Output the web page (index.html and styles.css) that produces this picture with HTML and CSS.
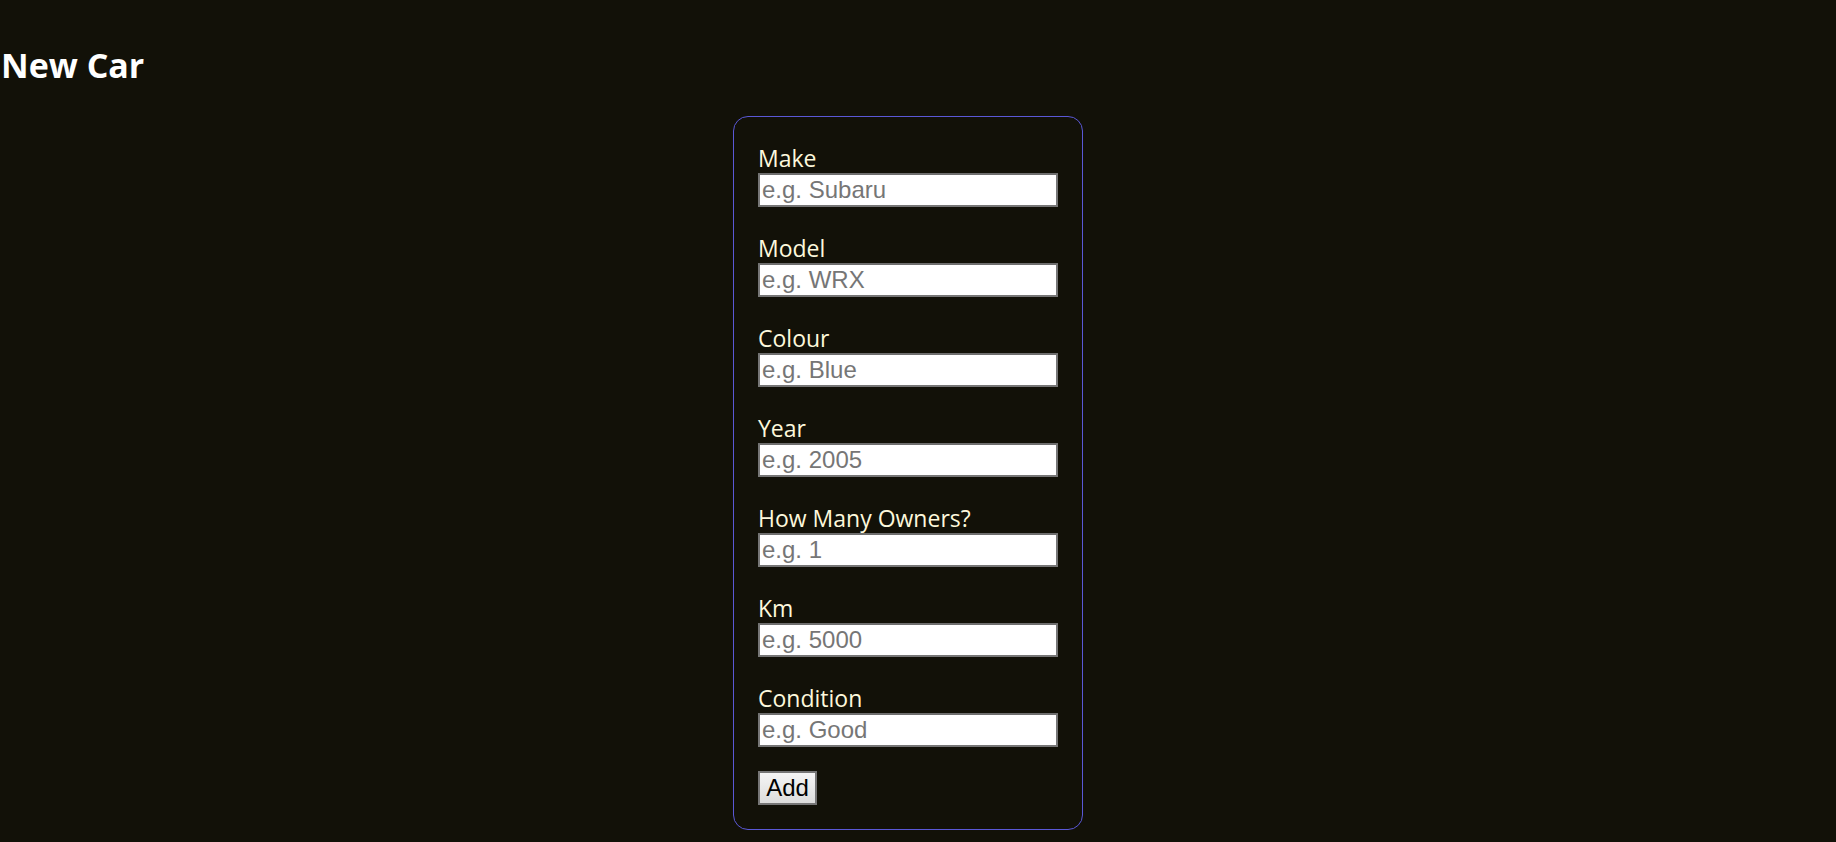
FILE: index.html
```html
<!DOCTYPE html>
<html>
<head>
<meta charset="utf-8">
<link rel="stylesheet" href="styles.css">
</head>
<body>
<h1 class="title">New Car</h1>
<div class="wrap">
  <form class="card">
    <div class="field"><label>Make</label><input type="text" placeholder="e.g. Subaru"></div>
    <div class="field"><label>Model</label><input type="text" placeholder="e.g. WRX"></div>
    <div class="field"><label>Colour</label><input type="text" placeholder="e.g. Blue"></div>
    <div class="field"><label>Year</label><input type="text" placeholder="e.g. 2005"></div>
    <div class="field"><label>How Many Owners?</label><input type="text" placeholder="e.g. 1"></div>
    <div class="field"><label>Km</label><input type="text" placeholder="e.g. 5000"></div>
    <div class="field"><label>Condition</label><input type="text" placeholder="e.g. Good"></div>
    <button type="button" class="btn">Add</button>
  </form>
</div>
</body>
</html>
```
FILE: styles.css
```css
html, body {
  margin: 0;
  padding: 0;
  background: #121108;
  height: 100%;
}
body {
  font-family: "Open Sans", "Noto Sans", sans-serif;
  color: #fdf8dc;
}
.title {
  margin: 0;
  padding: 41px 0 0 1px;
  font-size: 34px;
  line-height: 48px;
  font-weight: 700;
  color: #ffffff;
  height: 48px;
}
.wrap {
  display: flex;
  justify-content: center;
  padding-right: 20px;
  padding-top: 27px;
}
.card {
  width: 350px;
  box-sizing: border-box;
  border: 1px solid #5a58d6;
  border-radius: 15px;
  padding: 24px;
  display: flex;
  flex-direction: column;
  gap: 24px;
}
.field {
  display: flex;
  flex-direction: column;
}
.field label {
  font-size: 23px;
  line-height: 30px;
  padding-top: 2px;
  color: #fdf8dc;
}
.field input {
  box-sizing: border-box;
  width: 300px;
  height: 34px;
  margin: 0;
  border: 2px solid #767676;
  border-top-color: #6e6e6e;
  padding: 1px 2px;
  background: #fff;
  font-family: "Liberation Sans", Arial, sans-serif;
  font-size: 24px;
  color: #000;
  outline: none;
}
.field input::placeholder {
  color: #767676;
}
.btn {
  align-self: flex-start;
  box-sizing: border-box;
  width: 59px;
  height: 34px;
  margin: 0;
  padding: 0 6px;
  border: 2px solid #767676;
  background: linear-gradient(#f5f5f5, #dcdcdc);
  font-family: "Liberation Sans", Arial, sans-serif;
  font-size: 24px;
  color: #000;
}
```
